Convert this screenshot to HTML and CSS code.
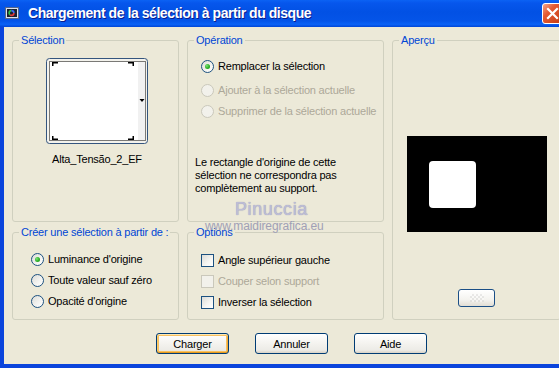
FILE: index.html
```html
<!DOCTYPE html>
<html>
<head>
  <meta charset="utf-8">
  <title>Chargement de la sélection à partir du disque</title>
  <link rel="stylesheet" href="styles.css">
</head>
<body>
  <div class="window">
    <div class="titlebar">
      <svg class="app-icon" width="14" height="14" viewBox="0 0 14 14">
        <rect x="0.5" y="1.5" width="13" height="11" fill="#DCE2EE" stroke="#56688C"/>
        <rect x="2" y="3" width="10" height="8" fill="#18202E"/>
        <circle cx="6.5" cy="7" r="2.4" fill="none" stroke="#E03A3A" stroke-width="1.6" stroke-dasharray="5 10.1"/>
        <circle cx="6.5" cy="7" r="2.4" fill="none" stroke="#2EC24A" stroke-width="1.6" stroke-dasharray="5 10.1" stroke-dashoffset="-5"/>
        <circle cx="6.5" cy="7" r="2.4" fill="none" stroke="#3A6CF0" stroke-width="1.6" stroke-dasharray="5 10.1" stroke-dashoffset="-10"/>
      </svg>
      <span class="title">Chargement de la sélection à partir du disque</span>
      <span class="close">
        <svg width="19" height="19" viewBox="0 0 19 19">
          <path d="M5 5L14 14M14 5L5 14" stroke="#fff" stroke-width="2.2" stroke-linecap="square"/>
        </svg>
      </span>
    </div>

    <div class="frame">
      <div class="groups">
        <fieldset class="group g-selection">
          <legend>Sélection</legend>
          <div class="thumb">
            <svg width="102" height="86" viewBox="0 0 102 86">
              <rect x="0.5" y="0.5" width="101" height="85" rx="3" fill="#F3F2EC" stroke="#34557E"/>
              <rect x="4" y="4" width="88" height="78" fill="#fff"/>
              <rect x="92" y="4" width="7" height="78" fill="#F1F1F1"/>
              <rect x="3.5" y="3.5" width="96" height="79" fill="none" stroke="#000" stroke-dasharray="1 1"/>
              <path d="M6 4h6v1.5h-4.5v2.5h-1.5z" fill="#000"/>
              <path d="M88 4h-6v1.5h4.5v2.5h1.5z" fill="#000"/>
              <path d="M6 82h6v-1.5h-4.5v-2.5h-1.5z" fill="#000"/>
              <path d="M88 82h-6v-1.5h4.5v-2.5h1.5z" fill="#000"/>
              <path d="M93.5 41h5l-2.5 3z" fill="#000"/>
            </svg>
          </div>
          <div class="thumb-name">Alta_Tensão_2_EF</div>
        </fieldset>

        <fieldset class="group g-operation">
          <legend>Opération</legend>
          <div class="choices">
            <div class="choice first"><span class="radio checked"></span>Remplacer la sélection</div>
            <div class="choice disabled"><span class="radio"></span>Ajouter à la sélection actuelle</div>
            <div class="choice disabled"><span class="radio"></span>Supprimer de la sélection actuelle</div>
          </div>
          <p class="note">Le rectangle d'origine de cette<br>sélection ne correspondra pas<br>complètement au support.</p>
        </fieldset>

        <fieldset class="group g-preview">
          <legend>Aperçu</legend>
          <div class="canvas"><div class="canvas-shape"></div></div>
          <div class="preview-btn"><span class="preview-glyph"></span></div>
        </fieldset>

        <fieldset class="group g-source">
          <legend>Créer une sélection à partir de :</legend>
          <div class="choices">
            <div class="choice"><span class="radio checked"></span>Luminance d'origine</div>
            <div class="choice"><span class="radio"></span>Toute valeur sauf zéro</div>
            <div class="choice"><span class="radio"></span>Opacité d'origine</div>
          </div>
        </fieldset>

        <fieldset class="group g-options">
          <legend>Options</legend>
          <div class="choices">
            <div class="choice"><span class="check"></span>Angle supérieur gauche</div>
            <div class="choice disabled"><span class="check"></span>Couper selon support</div>
            <div class="choice"><span class="check"></span>Inverser la sélection</div>
          </div>
        </fieldset>
      </div>

      <div class="actions">
        <button class="btn default">Charger</button>
        <button class="btn">Annuler</button>
        <button class="btn">Aide</button>
      </div>
    </div>

    <div class="watermark">
      <div class="wm-name">Pinuccia</div>
      <div class="wm-url">www.maidiregrafica.eu</div>
    </div>
  </div>
</body>
</html>
```

FILE: styles.css
```css
* {
  margin: 0;
  padding: 0;
  box-sizing: border-box;
}

body {
  font-family: "Liberation Sans", Arial, sans-serif;
  font-size: 11px;
  letter-spacing: -0.2px;
  color: #000;
  background: #ECE9D8;
  overflow: hidden;
}

.window {
  position: relative;
  width: 573px;
  height: 368px;
}

/* title bar */
.titlebar {
  display: flex;
  align-items: center;
  height: 27px;
  padding-left: 5px;
  background: linear-gradient(to bottom, #0B62F4 0%, #0656EC 12%, #0251E4 45%, #0454E8 78%, #0A62F6 90%, #0045D6 100%);
}

.app-icon {
  flex-shrink: 0;
  margin-top: -1px;
}

.title {
  margin-left: 9px;
  padding-bottom: 2px;
  color: #fff;
  font-weight: bold;
  font-size: 14px;
  letter-spacing: -0.45px;
  text-shadow: 1px 1px #0B1C8C;
  white-space: nowrap;
}

.close {
  align-self: flex-start;
  display: flex;
  align-items: center;
  justify-content: center;
  width: 21px;
  height: 21px;
  margin: 3px 10px 0 auto;
  border: 1px solid #fff;
  border-radius: 3px;
  background: linear-gradient(135deg, #F2A68E 0%, #E45A33 35%, #D24A22 70%, #C23A14 100%);
}

/* client area */
.frame {
  height: 341px;
  padding: 6px 0 10px 8px;
  border: 4px solid #0A44DC;
  border-top: 0;
}

.groups {
  display: grid;
  grid-template-columns: 167px 197px 169px;
  grid-template-rows: 189px 95px;
  column-gap: 8px;
  row-gap: 3px;
}

.group {
  min-width: 0;
  border: 1px solid #D0D0BF;
  border-radius: 3px;
}

.group legend {
  margin-left: 6px;
  padding: 0 2px;
  line-height: 14px;
  color: #0046D5;
  white-space: nowrap;
}

.g-selection {
  display: flex;
  flex-direction: column;
  align-items: center;
  padding-top: 11px;
}

.thumb {
  margin-left: 3px;
}

.thumb svg {
  display: block;
}

.thumb-name {
  margin-top: 9px;
  margin-left: 3px;
  line-height: 13px;
}

.g-operation {
  padding-top: 13px;
}

.g-operation .choices {
  padding-left: 13px;
}

.g-preview {
  grid-column: 3;
  grid-row: 1 / span 2;
  display: flex;
  flex-direction: column;
  align-items: center;
  padding-top: 89px;
}

.g-source {
  grid-column: 1;
  grid-row: 2;
  padding-top: 14px;
}

.g-source .choices {
  padding-left: 18px;
}

.g-options {
  grid-column: 2;
  grid-row: 2;
  padding-top: 15px;
}

.g-options .choices {
  padding-left: 13px;
}

/* radios and checkboxes */
.choices {
  display: flex;
  flex-direction: column;
  gap: 8px;
}

.choice {
  display: flex;
  align-items: center;
  gap: 4px;
  height: 13px;
  line-height: 13px;
  white-space: nowrap;
}

.choice.first {
  margin-bottom: 3px;
}

.choice.disabled {
  color: #ACA899;
}

.radio {
  position: relative;
  flex-shrink: 0;
  width: 13px;
  height: 13px;
  border: 1px solid #1C5180;
  border-radius: 50%;
  background: linear-gradient(135deg, #DCDCD7 0%, #F4F4F1 60%, #FFFFFF 100%);
}

.radio.checked::after {
  content: "";
  position: absolute;
  left: 3px;
  top: 3px;
  width: 5px;
  height: 5px;
  border-radius: 50%;
  background: radial-gradient(circle at 35% 35%, #7CE476 0%, #2BAF27 55%, #1A8F16 100%);
}

.check {
  flex-shrink: 0;
  width: 13px;
  height: 13px;
  border: 1px solid #1C5180;
  background: linear-gradient(135deg, #DCDCD7 0%, #F6F6F3 60%, #FFFFFF 100%);
}

.disabled .radio,
.disabled .check {
  border-color: #CAC8BB;
  background: #F2F1EB;
}

.note {
  margin-top: 38px;
  padding-left: 7px;
  line-height: 13px;
}

/* preview */
.canvas {
  width: 140px;
  height: 96px;
  padding: 25px 0 0 22px;
  background: #000;
}

.canvas-shape {
  width: 47px;
  height: 47px;
  border-radius: 4px;
  background: #fff;
}

.preview-btn {
  display: flex;
  align-items: center;
  justify-content: center;
  width: 37px;
  height: 18px;
  margin-top: 57px;
  border: 1px solid #1B4F86;
  border-radius: 3px;
  background: linear-gradient(to bottom, #FFFFFF 0%, #F4F3EF 60%, #E2DED4 100%);
}

.preview-glyph {
  width: 14px;
  height: 8px;
  opacity: 0.35;
  background: repeating-conic-gradient(#C8C8C8 0 25%, #FFFFFF 0 50%) 0 0 / 4px 4px;
}

/* buttons */
.actions {
  display: flex;
  gap: 26px;
  margin-top: 13px;
  padding-left: 144px;
}

.btn {
  width: 73px;
  height: 21px;
  font: inherit;
  letter-spacing: -0.2px;
  color: #000;
  border: 1px solid #003C74;
  border-radius: 3px;
  background: linear-gradient(to bottom, #FFFFFF 0%, #F5F4F0 45%, #ECEBE6 85%, #D8D2C6 100%);
}

.btn.default {
  box-shadow: inset 0 1px #FFE9B4, inset 0 -1px #E59A1F, inset 1px 0 #FBCB6A, inset -1px 0 #F1AA36, inset 0 0 0 2px #F8C160;
}

/* watermark over the dialog */
.watermark {
  position: absolute;
  left: 205px;
  top: 200px;
  display: flex;
  flex-direction: column;
  pointer-events: none;
}

.wm-name {
  margin-left: 30px;
  font-size: 18px;
  line-height: 18px;
  letter-spacing: 0.6px;
  color: #BDBDD6;
  text-shadow: 0 0 1px #9090B4;
}

.wm-url {
  margin-top: 2px;
  font-size: 12px;
  line-height: 12px;
  letter-spacing: -0.1px;
  color: #A0A0B6;
}
```
